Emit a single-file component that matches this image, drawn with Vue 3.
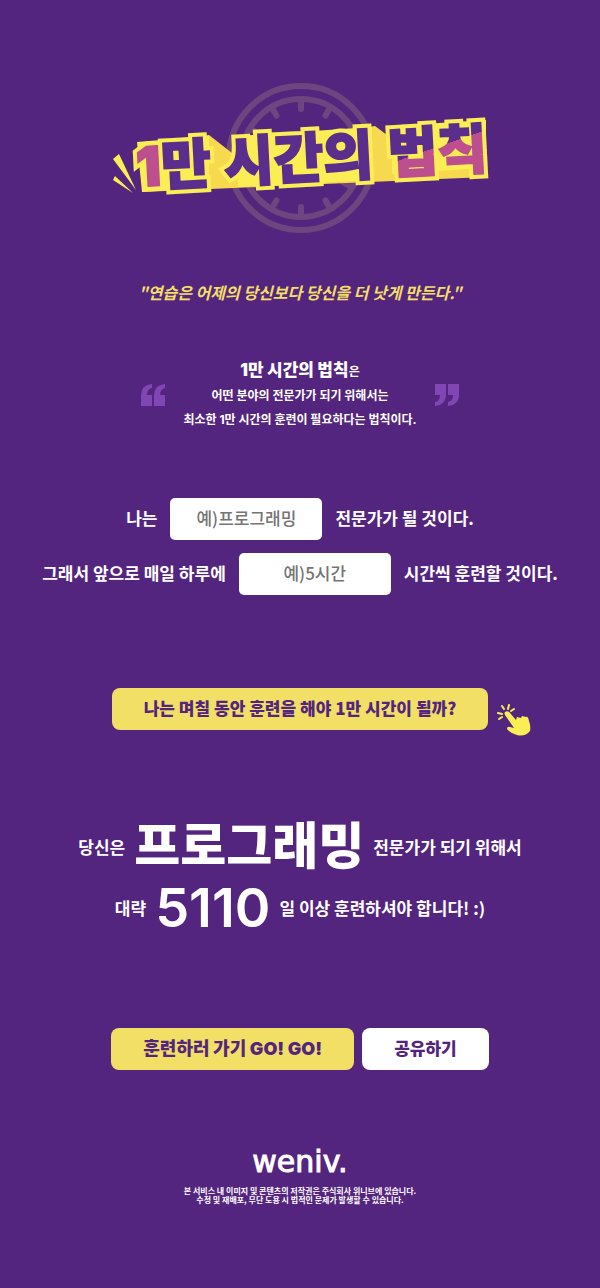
<script setup>
import { ref } from 'vue'

const field = ref('')
const hours = ref('')
const shownField = ref('프로그래밍')
const shownDays = ref(5110)
const ticks = Array.from({ length: 12 }, (_, i) => i * 30)

function calculate() {
  const perDay = parseFloat(hours.value)
  if (field.value) shownField.value = field.value
  if (perDay > 0) shownDays.value = Math.ceil(10000 / perDay)
}
</script>

<template>
  <main class="page">
    <h1 class="title">
      <svg class="title-art" viewBox="110 80 380 156" role="img" aria-label="1만 시간의 법칙">
        <defs>
          <linearGradient id="split" gradientUnits="userSpaceOnUse" x1="429" y1="105" x2="457" y2="201">
            <stop offset="0.5" stop-color="#5b2d8c" />
            <stop offset="0.5" stop-color="#bd4f8f" />
          </linearGradient>
        </defs>
        <g fill="none" stroke="#6e467f" stroke-width="6" stroke-linecap="round">
          <circle cx="301" cy="158" r="72" />
          <circle cx="301" cy="158" r="59" />
          <path v-for="a in ticks" :key="a" d="M301 101v8" :transform="`rotate(${a} 301 158)`" />
        </g>
        <path d="M113 159l6-5 17 36z M113 180l2-4 18 17z" fill="#fbee55" />
        <path d="M143 150L163 140L209 135L232 153L240 146L375 126L391 138L486 124V177L142 192z" fill="#f6d94f" />
        <path d="M238 136L372 127V180L238 187z M392 126L486 120V168L392 174z M137 142L209 136V188L142 192z" fill="#fbee55" />
        <g class="title-text" transform="rotate(-3 300 178)">
          <g class="outline">
            <text x="137" y="178">1</text>
            <text x="162" y="178">만</text>
            <text x="225" y="178">시간의</text>
            <text x="389" y="178">법칙</text>
          </g>
          <text class="pink" x="137" y="178">1</text>
          <text class="plum" x="162" y="178">만</text>
          <text class="plum" x="225" y="178">시간의</text>
          <text class="split" x="389" y="178">법칙</text>
        </g>
      </svg>
    </h1>

    <p class="motto">"연습은 어제의 당신보다 당신을 더 낫게 만든다."</p>

    <section class="law">
      <svg class="mark" viewBox="0 0 25 22" aria-hidden="true">
        <path d="M11 0v4Q6 5 6 11h5v11H0V12Q0 1 11 0zM24 0v4Q19 5 19 11h5v11H13V12Q13 1 24 0z" />
      </svg>
      <div class="law-text">
        <p class="lead"><strong>1만 시간의 법칙</strong>은</p>
        <p>어떤 분야의 전문가가 되기 위해서는</p>
        <p>최소한 1만 시간의 훈련이 필요하다는 법칙이다.</p>
      </div>
      <svg class="mark" viewBox="0 0 25 22" aria-hidden="true">
        <path transform="rotate(180 12.5 11)" d="M11 0v4Q6 5 6 11h5v11H0V12Q0 1 11 0zM24 0v4Q19 5 19 11h5v11H13V12Q13 1 24 0z" />
      </svg>
    </section>

    <form class="form" @submit.prevent="calculate">
      <div class="row">
        <label for="field">나는</label>
        <input id="field" v-model="field" type="text" placeholder="예)프로그래밍" />
        <span>전문가가 될 것이다.</span>
      </div>
      <div class="row">
        <label for="hours">그래서 앞으로 매일 하루에</label>
        <input id="hours" v-model="hours" type="text" placeholder="예)5시간" />
        <span>시간씩 훈련할 것이다.</span>
      </div>
      <div class="submit">
        <button class="btn" type="submit">나는 며칠 동안 훈련을 해야 1만 시간이 될까?</button>
        <svg class="hand" viewBox="0 0 34 33" aria-hidden="true">
          <path d="M8 8Q11 6 13 9L19 16L20 13L24 14L25 12L29 13Q31 12 32 17Q34 22 33 27Q28 33 20 31Q13 29 10 25Q10 22 13 23L17 24L8 11Q7 9 8 8z" fill="#fbee55" />
          <path d="M1 9l4 1M5 2l2 3M12 1l-1 4M17 5l-3 2M2 15l3-2" fill="none" stroke="#fbee55" stroke-width="2" stroke-linecap="round" />
        </svg>
      </div>
    </form>

    <section class="result">
      <p class="row"><span>당신은</span><strong>{{ shownField }}</strong><span>전문가가 되기 위해서</span></p>
      <p class="row"><span>대략</span><strong class="days">{{ shownDays }}</strong><span>일 이상 훈련하셔야 합니다! :)</span></p>
    </section>

    <div class="actions">
      <button class="btn go" type="button">훈련하러 가기 GO! GO!</button>
      <button class="btn white" type="button">공유하기</button>
    </div>

    <footer class="footer">
      <p class="brand">weniv.</p>
      <p class="notice">
        본 서비스 내 이미지 및 콘텐츠의 저작권은 주식회사 위니브에 있습니다.<br />
        수정 및 재배포, 무단 도용 시 법적인 문제가 발생할 수 있습니다.
      </p>
    </footer>
  </main>
</template>

<style>
body {
  margin: 0;
  background: #54257f;
}
</style>

<style scoped>
.page {
  box-sizing: border-box;
  min-height: 100vh;
  padding: 80px 20px;
  display: flex;
  flex-direction: column;
  align-items: center;
  background: #54257f;
  color: #fff;
  font-family: "Noto Sans CJK KR", sans-serif;
  font-size: 17px;
  font-weight: 700;
}
h1,
p {
  margin: 0;
}
.title {
  width: 100%;
  max-width: 380px;
  line-height: 0;
}
.title-art {
  width: 100%;
  height: auto;
}
.title-text {
  font-family: Inter, "Noto Sans CJK KR", sans-serif;
  font-size: 54px;
  font-weight: 900;
  stroke-width: 2px;
}
.outline {
  fill: #fbee55;
  stroke: #fbee55;
  stroke-width: 10px;
}
.pink {
  fill: #bd4f8f;
  stroke: #bd4f8f;
}
.plum {
  fill: #5b2d8c;
  stroke: #5b2d8c;
}
.split {
  fill: url(#split);
  stroke: url(#split);
}
.motto {
  margin-top: 44px;
  color: #f1df66;
  font-size: 16px;
  font-style: italic;
  line-height: 24px;
}
.law {
  margin-top: 54px;
  display: flex;
  align-items: center;
  justify-content: space-between;
  width: 100%;
  max-width: 318px;
}
.law-text {
  text-align: center;
  white-space: nowrap;
  font-family: Inter, "Noto Sans CJK KR", sans-serif;
  font-size: 12px;
  line-height: 24px;
}
.lead {
  height: 26px;
}
.lead strong {
  font-size: 17px;
}
.mark {
  flex: none;
  width: 25px;
  height: 22px;
  fill: #7f47b3;
}
.form {
  margin-top: 66px;
  display: flex;
  flex-direction: column;
  align-items: center;
  gap: 13px;
}
.row {
  display: flex;
  align-items: center;
  justify-content: center;
  gap: 13px;
  white-space: nowrap;
}
.form label,
.form span {
  padding-bottom: 4px;
}
input {
  box-sizing: border-box;
  width: 152px;
  height: 42px;
  padding: 0 12px 4px;
  border: 0;
  border-radius: 5px;
  background: #fff;
  color: #54257f;
  font: inherit;
  font-weight: 500;
  text-align: center;
}
input::placeholder {
  color: #757575;
  opacity: 1;
}
.submit {
  position: relative;
  margin-top: 80px;
}
.btn {
  height: 42px;
  padding: 0 32px 4px;
  border: 0;
  border-radius: 8px;
  background: #f1df66;
  color: #54257f;
  font: inherit;
  font-weight: 900;
  white-space: nowrap;
  cursor: pointer;
}
.go {
  font-family: Inter, "Noto Sans CJK KR", sans-serif;
  font-size: 18px;
}
.white {
  background: #fff;
}
.hand {
  position: absolute;
  left: calc(100% + 9px);
  top: 16px;
  width: 34px;
  height: 33px;
}
.result {
  margin-top: 86px;
}
.result .row {
  gap: 9px;
  height: 61px;
}
.result strong {
  font-family: Inter, "Noto Sans CJK KR", sans-serif;
  font-size: 50px;
  line-height: 53px;
}
.result .days {
  font-size: 54px;
  font-weight: 600;
}
.actions {
  margin-top: 90px;
  display: flex;
  gap: 8px;
}
.footer {
  margin-top: 80px;
  text-align: center;
}
.brand {
  font-family: "DejaVu Sans", sans-serif;
  font-size: 30px;
  font-weight: 400;
  line-height: 24px;
  -webkit-text-stroke: 1px #fff;
}
.notice {
  margin-top: 12px;
  font-size: 8px;
  line-height: 9px;
}
</style>
